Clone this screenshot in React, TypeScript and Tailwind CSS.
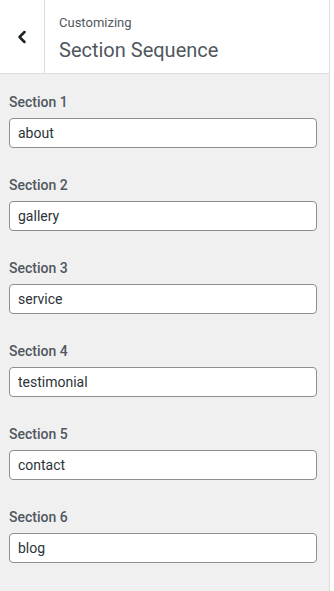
import { ChevronLeft } from "lucide-react";

const sections = ["about", "gallery", "service", "testimonial", "contact", "blog"];

export default function App() {
  return (
    <div className="w-[334px] h-[591px] bg-white flex font-['Roboto',sans-serif] overflow-hidden">
      <div className="w-[330px] bg-[#f0f0f1] border-r border-[#dcdcde] flex flex-col">
        <div className="h-[74px] bg-white border-b border-[#dcdcde] flex">
          <button className="w-[45px] border-r border-[#dcdcde] flex items-center justify-center text-[#1d2327]">
            <ChevronLeft size={20} strokeWidth={3} />
          </button>
          <div className="pl-[14px] pt-[14px]">
            <div className="text-[13px] leading-[18px] text-[#50575e]">Customizing</div>
            <div className="text-[20px] leading-[28px] text-[#50575e] mt-[4px]">Section Sequence</div>
          </div>
        </div>
        <div className="pt-[18px] pl-[9px] pr-[12px] flex flex-col gap-[27px]">
          {sections.map((s, i) => (
            <div key={s} className="flex flex-col">
              <label className="text-[14px] leading-[20px] font-medium text-[#50575e]">Section {i + 1}</label>
              <input
                readOnly
                value={s}
                className="mt-[6px] h-[30px] w-full bg-white border border-[#8c8f94] rounded-[4px] px-[8px] text-[14px] text-[#2c3338] outline-none"
              />
            </div>
          ))}
        </div>
      </div>
    </div>
  );
}
